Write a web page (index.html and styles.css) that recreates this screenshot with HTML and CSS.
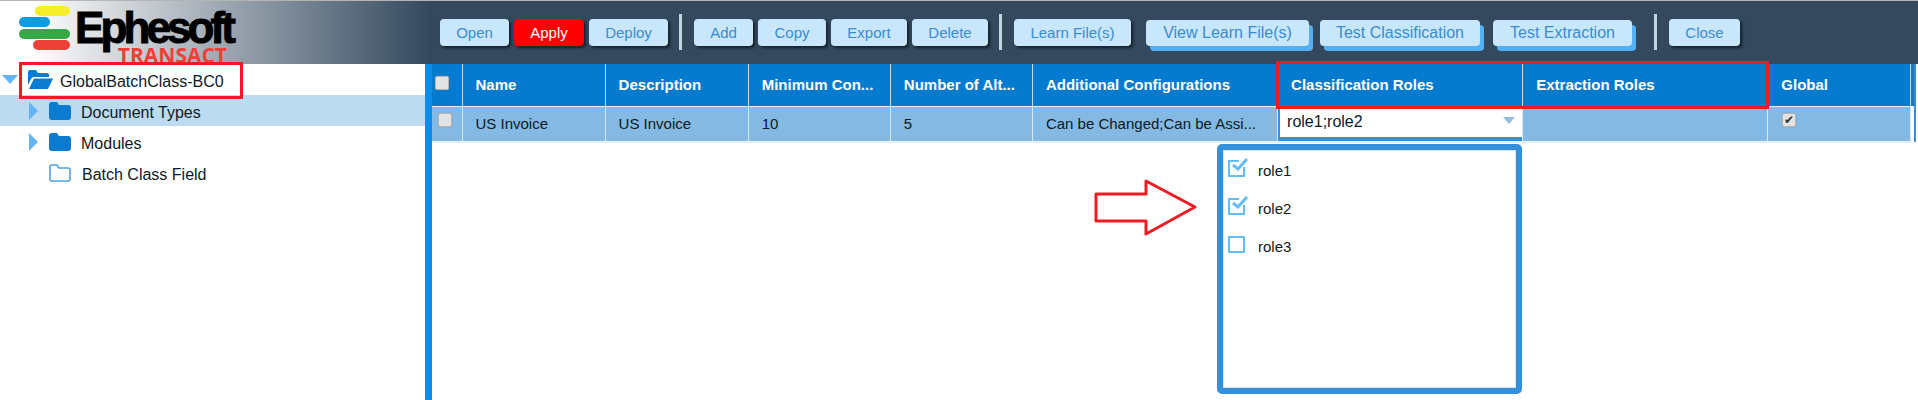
FILE: index.html
```html
<!DOCTYPE html>
<html lang="en">
<head>
    <meta charset="UTF-8">
    <title>Ephesoft Transact</title>
    <link rel="stylesheet" href="styles.css">
</head>
<body>
    <div class="app">
        <header class="header">
            <div class="logo">
                <svg class="logo-bars" width="51" height="45" viewBox="0 0 51 45">
                    <rect x="16" y="0" width="35" height="10" rx="5" fill="#f6ee2b"/>
                    <rect x="0" y="11" width="31" height="10" rx="5" fill="#0f9ddc"/>
                    <rect x="0" y="23" width="51" height="10" rx="5" fill="#35a946"/>
                    <rect x="14" y="34" width="37" height="10" rx="5" fill="#ee4036"/>
                </svg>
                <div class="wordmark">
                    <div class="wordmark-name">Ephesoft</div>
                    <div class="wordmark-sub">TRANSACT</div>
                </div>
            </div>
            <nav class="toolbar">
                <button class="btn btn-open">Open</button>
                <button class="btn btn-apply">Apply</button>
                <button class="btn btn-deploy">Deploy</button>
                <span class="sep"></span>
                <button class="btn btn-add">Add</button>
                <button class="btn btn-copy">Copy</button>
                <button class="btn btn-export">Export</button>
                <button class="btn btn-delete">Delete</button>
                <span class="sep"></span>
                <button class="btn btn-learn">Learn File(s)</button>
                <button class="btn btn-big btn-view">View Learn File(s)</button>
                <button class="btn btn-big btn-testc">Test Classification</button>
                <button class="btn btn-big btn-teste">Test Extraction</button>
                <span class="sep sep-last"></span>
                <button class="btn btn-close">Close</button>
            </nav>
        </header>

        <div class="content">
            <aside class="tree">
                <div class="tree-row tree-root">
                    <span class="arrow-down"></span>
                    <svg class="folder-open" width="25" height="19" viewBox="0 0 25 19">
                        <path d="M0 2 Q0 0 2 0 H8 L10 3 H19 Q21 3 21 5 V7 H6 Q4 7 3 9 L0 15 Z" fill="#0a7bd0"/>
                        <path d="M6 8.5 H25 L20 19 H1 Z" fill="#0a7bd0"/>
                    </svg>
                    <span class="root-label">GlobalBatchClass-BC0</span>
                </div>
                <div class="tree-row tree-child selected">
                    <span class="arrow-right"></span>
                    <svg class="folder" width="22" height="18" viewBox="0 0 22 18">
                        <path d="M0 3 Q0 0 3 0 H8 L10 3 H19 Q22 3 22 6 V15 Q22 18 19 18 H3 Q0 18 0 15 Z" fill="#0a7bd0"/>
                    </svg>
                    <span class="tree-label">Document Types</span>
                </div>
                <div class="tree-row tree-child">
                    <span class="arrow-right"></span>
                    <svg class="folder" width="22" height="18" viewBox="0 0 22 18">
                        <path d="M0 3 Q0 0 3 0 H8 L10 3 H19 Q22 3 22 6 V15 Q22 18 19 18 H3 Q0 18 0 15 Z" fill="#0a7bd0"/>
                    </svg>
                    <span class="tree-label">Modules</span>
                </div>
                <div class="tree-row tree-child">
                    <span class="arrow-none"></span>
                    <svg class="folder" width="22" height="18" viewBox="0 0 22 18">
                        <path d="M1 3 Q1 1 3 1 H8 L10 4 H19 Q21 4 21 6 V15 Q21 17 19 17 H3 Q1 17 1 15 Z" fill="none" stroke="#4da3e0" stroke-width="1.6"/>
                    </svg>
                    <span class="tree-label tree-label-leaf">Batch Class Field</span>
                </div>
            </aside>

            <div class="splitter"></div>

            <main class="main">
                <table class="grid">
                    <colgroup>
                        <col class="c-check">
                        <col class="c-name">
                        <col class="c-desc">
                        <col class="c-min">
                        <col class="c-num">
                        <col class="c-add">
                        <col class="c-class">
                        <col class="c-extr">
                        <col class="c-glob">
                        <col class="c-gutter">
                    </colgroup>
                    <thead>
                        <tr>
                            <th class="check-cell"><span class="cb cb-head"></span></th>
                            <th>Name</th>
                            <th>Description</th>
                            <th>Minimum Con...</th>
                            <th>Number of Alt...</th>
                            <th>Additional Configurations</th>
                            <th>Classification Roles</th>
                            <th>Extraction Roles</th>
                            <th>Global</th>
                            <th class="gutter"></th>
                        </tr>
                    </thead>
                    <tbody>
                        <tr>
                            <td class="check-cell"><span class="cb cb-row"></span></td>
                            <td>US Invoice</td>
                            <td>US Invoice</td>
                            <td>10</td>
                            <td>5</td>
                            <td>Can be Changed;Can be Assi...</td>
                            <td class="edit-cell">
                                <div class="combo">
                                    <span>role1;role2</span>
                                    <span class="combo-arrow"></span>
                                </div>
                            </td>
                            <td></td>
                            <td><span class="cb cb-row cb-global">&#10004;</span></td>
                            <td class="gutter"></td>
                        </tr>
                    </tbody>
                </table>
            </main>
        </div>

        <div class="popup">
            <div class="popup-inner">
                <div class="popup-item">
                    <svg class="tick" width="21" height="20" viewBox="0 0 21 20">
                        <path d="M11 4 H1 V19 H16 V10" fill="none" stroke="#64bdfb" stroke-width="2"/>
                        <path d="M5 8 L10 12 L19 2" fill="none" stroke="#fff" stroke-width="5"/>
                        <path d="M5 8 L10 12 L19 2" fill="none" stroke="#64bdfb" stroke-width="3"/>
                    </svg>
                    <span>role1</span>
                </div>
                <div class="popup-item">
                    <svg class="tick" width="21" height="20" viewBox="0 0 21 20">
                        <path d="M11 4 H1 V19 H16 V10" fill="none" stroke="#64bdfb" stroke-width="2"/>
                        <path d="M5 8 L10 12 L19 2" fill="none" stroke="#fff" stroke-width="5"/>
                        <path d="M5 8 L10 12 L19 2" fill="none" stroke="#64bdfb" stroke-width="3"/>
                    </svg>
                    <span>role2</span>
                </div>
                <div class="popup-item">
                    <svg class="tick" width="21" height="20" viewBox="0 0 21 20">
                        <rect x="1" y="4" width="15" height="15" fill="none" stroke="#64bdfb" stroke-width="2"/>
                    </svg>
                    <span>role3</span>
                </div>
            </div>
        </div>

        <!-- red annotations drawn on top of the screen -->
        <div class="mark mark-root"></div>
        <div class="mark mark-roles"></div>
        <svg class="mark-arrow" width="104" height="58" viewBox="0 0 104 58">
            <path d="M2 15 H52 V2 L101 28 L52 55 V42 H2 Z" fill="#fff" stroke="#ed1c24" stroke-width="3" stroke-linejoin="round"/>
        </svg>
    </div>
</body>
</html>
```

FILE: styles.css
```css
* {
    margin: 0;
    padding: 0;
    box-sizing: border-box;
    font-family: 'Liberation Sans', Arial, sans-serif;
}

html, body {
    background-color: white;
    overflow: hidden;
}

.app {
    position: relative;
    width: 1918px;
    height: 400px;
    display: flex;
    flex-direction: column;
}

/* header */
.header {
    height: 64px;
    display: flex;
    border-top: 1px solid #b4b4b4;
    background: linear-gradient(to right, #ffffff 0, #ffffff 30px, #34495e 430px);
}

.logo {
    width: 440px;
    padding: 5px 0 0 19px;
    display: flex;
    align-items: flex-start;
}

.logo-bars {
    flex: none;
}

.wordmark {
    margin: 4px 0 0 5px;
    width: 160px;
}

.wordmark-name {
    font-size: 44px;
    line-height: 36px;
    font-weight: bold;
    letter-spacing: -3.9px;
    color: #000;
    -webkit-text-stroke: 1px #000;
}

.wordmark-sub {
    margin: 0 8px 0 0;
    font-family: 'Open Sans', sans-serif;
    font-size: 21px;
    line-height: 19px;
    font-weight: bold;
    text-align: right;
    color: #ee4036;
}

.toolbar {
    flex: 1;
    display: flex;
    align-items: flex-start;
    padding-top: 18px;
}

.btn {
    height: 27px;
    margin-right: 5px;
    border: none;
    border-radius: 4px;
    background-color: #c8e7fd;
    color: #3a8bd0;
    font-size: 15px;
    box-shadow: 2px 2px 3px #14202c;
}

.btn-open { width: 69px; }
.btn-apply { width: 70px; background-color: #ff0000; color: white; }
.btn-deploy { width: 79px; margin-right: 0; }
.btn-add { width: 59px; }
.btn-copy { width: 68px; }
.btn-export { width: 76px; }
.btn-delete { width: 76px; margin-right: 0; }
.btn-learn { width: 117px; margin-right: 15px; }

.btn-big {
    height: 26px;
    margin-top: 1px;
    font-size: 16px;
    box-shadow: 4px 5px 0 #53b0f7;
}

.btn-view { width: 163px; margin-right: 11px; }
.btn-testc { width: 160px; margin-right: 13px; }
.btn-teste { width: 139px; margin-right: 0; }
.btn-close { width: 71px; }

.sep {
    width: 3px;
    height: 36px;
    margin: -5px 12px 0 11px;
    background-color: #c3d3e0;
}

.sep-last {
    margin: -5px 12px 0 22px;
}

/* body */
.content {
    flex: 1;
    display: flex;
    min-height: 0;
}

.tree {
    width: 425px;
    flex: none;
}

.tree-row {
    height: 31px;
    display: flex;
    align-items: center;
    font-size: 16px;
    color: #0c1a26;
}

.tree-root {
    padding-left: 2px;
}

.tree-child {
    padding-left: 29px;
}

.selected {
    background-color: #bddbf0;
}

.arrow-down {
    width: 0;
    height: 0;
    border-left: 8px solid transparent;
    border-right: 8px solid transparent;
    border-top: 9px solid #64b5f6;
}

.arrow-right {
    width: 0;
    height: 0;
    border-top: 9px solid transparent;
    border-bottom: 9px solid transparent;
    border-left: 9px solid #64b5f6;
}

.arrow-none {
    width: 9px;
}

.folder-open {
    margin: 0 0 0 10px;
}

.folder {
    margin: 0 0 0 11px;
}

.root-label {
    margin: 5px 0 0 7px;
}

.tree-label {
    margin: 5px 0 0 10px;
}

.tree-label-leaf {
    margin-left: 11px;
}

.splitter {
    width: 7px;
    flex: none;
    background-color: #0a8ce8;
}

.main {
    flex: 1;
    min-width: 0;
    padding-right: 2px;
}

.grid {
    width: 1484px;
    table-layout: fixed;
    border-collapse: collapse;
    font-size: 15px;
    border-right: 2px solid #3490d8;
}

.c-check { width: 30px; }
.c-name { width: 143px; }
.c-desc { width: 143px; }
.c-min { width: 142px; }
.c-num { width: 142px; }
.c-add { width: 245px; }
.c-class { width: 245px; }
.c-extr { width: 245px; }
.c-glob { width: 143px; }
.c-gutter { width: 4px; }

.grid th {
    height: 42px;
    padding: 0 0 0 13px;
    background-color: #047bcf;
    border-right: 1px solid #c9dcea;
    border-bottom: 1px solid #e6f0f8;
    color: white;
    text-align: left;
    font-weight: bold;
    white-space: nowrap;
    overflow: hidden;
}

.grid td {
    height: 36px;
    padding: 0 0 0 13px;
    background-color: #84b9e3;
    border-right: 1px solid #dbe8f2;
    border-bottom: 2px solid #e6f0f8;
    color: #0c1a26;
    white-space: nowrap;
    overflow: hidden;
}

.grid .gutter {
    padding: 0;
    border: none;
}

.grid th.gutter {
    background-color: #1a78c2;
}

.grid td.gutter {
    background-color: white;
}

.grid .check-cell {
    padding: 0;
}

.grid .edit-cell {
    padding: 0 0 0 2px;
    vertical-align: top;
    background-color: #3490d8;
}

.cb {
    display: block;
    width: 14px;
    height: 14px;
    background-color: #e3e3e3;
    border: 1px solid #b5b5b5;
    border-radius: 2px;
    box-shadow: 0 0 1px #888;
    font-size: 12px;
    line-height: 12px;
    text-align: center;
    color: #333;
}

.cb-head {
    margin: -3px 0 0 3px;
}

.cb-row {
    margin: -7px 0 0 6px;
}

.cb-global {
    margin-left: 1px;
}

.combo {
    height: 30px;
    padding: 0 7px 0 7px;
    display: flex;
    align-items: center;
    justify-content: space-between;
    background-color: white;
    font-size: 16px;
    color: #0c1a26;
}

.combo-arrow {
    width: 0;
    height: 0;
    margin-top: -2px;
    border-left: 6px solid transparent;
    border-right: 6px solid transparent;
    border-top: 7px solid #8fc0e8;
}

/* checkbox popup under the role cell */
.popup {
    position: absolute;
    left: 1217px;
    top: 144px;
    width: 305px;
    height: 250px;
    border: 6px solid #3490d8;
    border-radius: 5px;
    background-color: white;
}

.popup-inner {
    height: 100%;
    padding: 0 0 0 4px;
    border: 1px solid #dde3e8;
}

.popup-item {
    height: 38px;
    display: flex;
    align-items: center;
    font-size: 15px;
    color: #0c1a26;
}

.tick {
    margin: -6px 9px 0 0;
}

/* annotations */
.mark {
    position: absolute;
    border: 3px solid #ed1c24;
}

.mark-root {
    left: 19px;
    top: 62px;
    width: 224px;
    height: 37px;
}

.mark-roles {
    left: 1276px;
    top: 61px;
    width: 493px;
    height: 48px;
}

.mark-arrow {
    position: absolute;
    left: 1094px;
    top: 179px;
}
```
